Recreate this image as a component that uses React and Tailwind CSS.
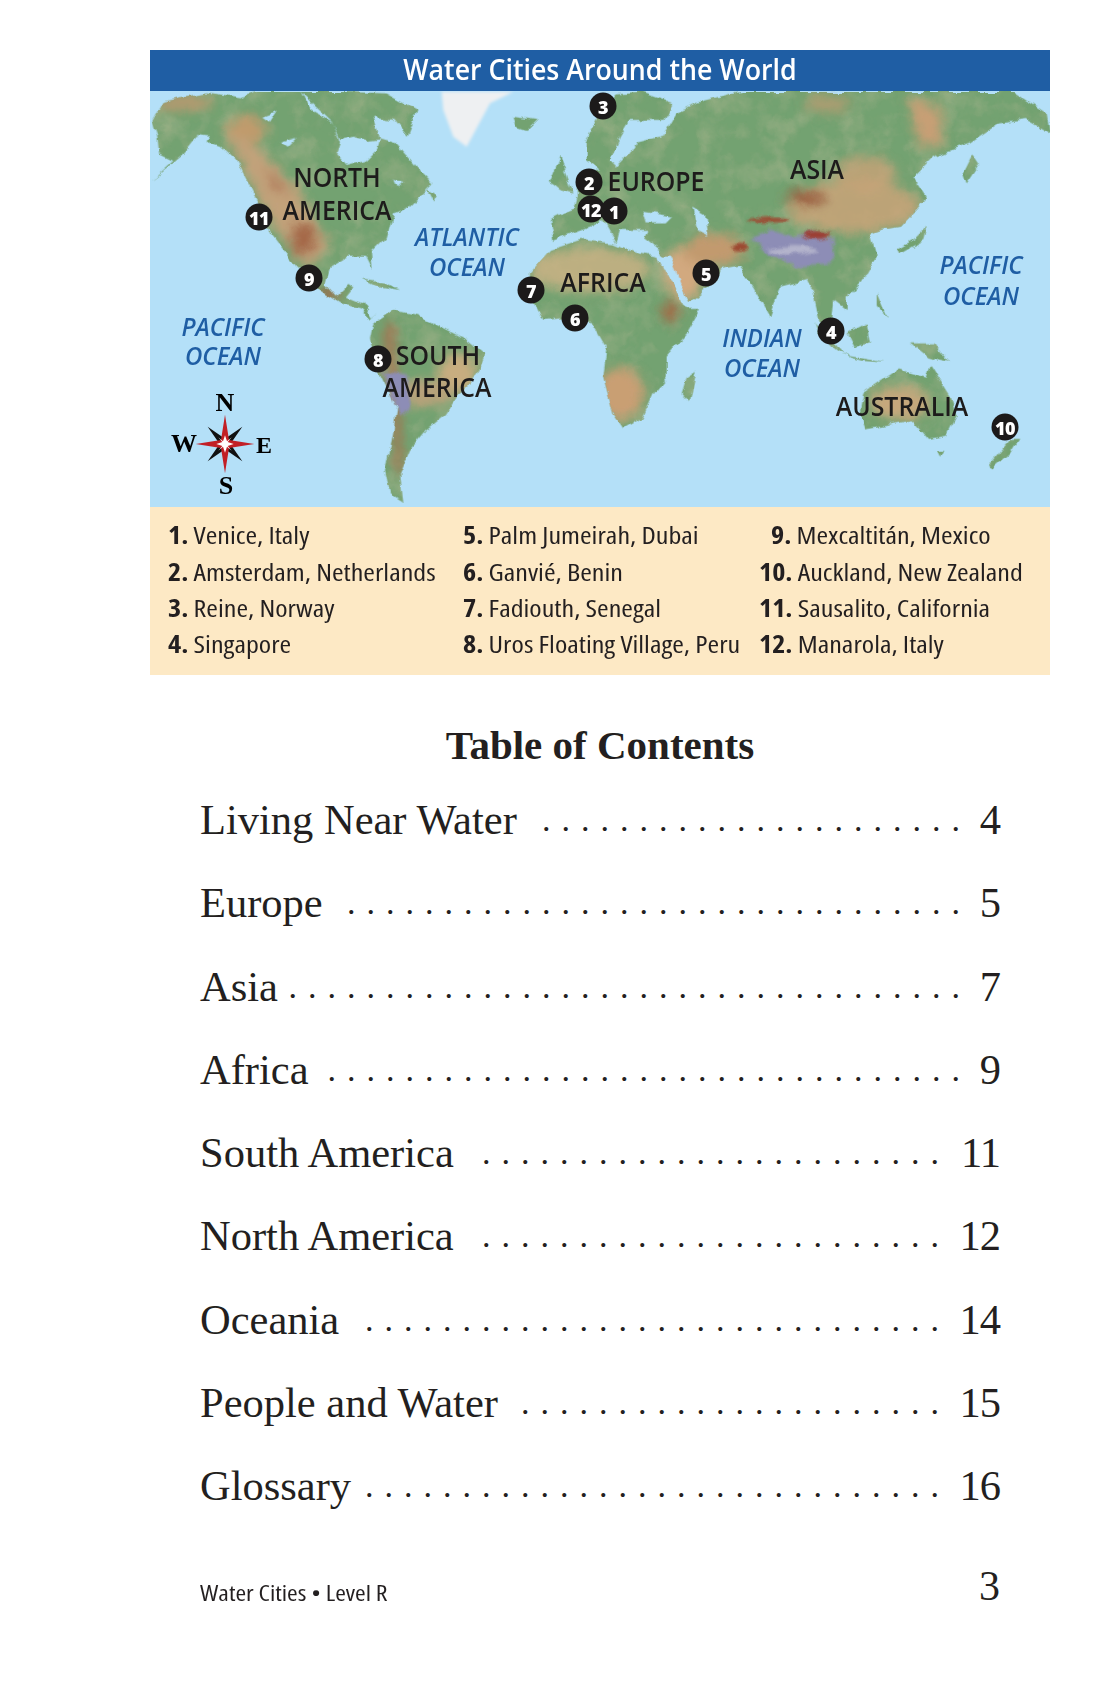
import React from "react";

const sans = "font-['Open_Sans',sans-serif]";

// outlines traced off the map, in 3x map pixels
const westLand = [
  "40,240 70,185 200,160 300,175 350,155 480,155 520,215 580,250 600,310 590,340 620,375 680,360 710,330 720,295 770,310 830,380 880,430 850,460 810,500 760,520 740,590 690,640 695,690 675,650 620,650 570,680 555,730 590,770 625,735 640,745 620,770 670,790 695,830 715,815 690,835 660,805 600,790 540,750 470,680 420,620 390,580 360,500 335,450 290,360 240,315 170,290 130,340 60,400 35,420 100,360 60,340 55,290",
  "480,155 600,155 700,230 720,295 680,300 640,290 600,300 580,250",
  "600,155 740,160 830,210 800,290 760,240 700,230 640,200",
  "700,850 760,810 830,825 900,860 980,900 1035,945 1010,1010 960,1060 920,1120 860,1170 810,1230 780,1300 790,1385 750,1360 735,1290 760,1180 770,1100 720,1000 700,950 690,900",
  "1120,230 1190,240 1160,270 1130,260",
  "670,715 730,725 780,750 720,740",
  "860,450 890,470 880,490",
  "1230,425 1260,350 1280,400 1300,460 1260,450",
  "1225,425 1250,400 1250,440",
];

const eastLand = [
  "-90,540 -60,525 -20,510 -10,470 -10,440 30,400 60,390 20,360 20,300 60,220 110,160 180,155 280,190 250,240 150,240 120,290 90,360 110,380 150,340 170,310 250,290 290,220 350,190 430,170 490,155 900,155 1300,155 1400,220 1410,280 1340,240 1260,250 1170,310 1060,350 1000,410 1040,470 960,560 900,570 870,580 890,650 850,720 800,770 800,810 760,780 750,870 720,850 700,760 680,720 600,740 570,830 520,740 480,680 420,690 410,720 330,785 280,700 240,630 190,590 200,570 120,570 110,610 70,540 30,560 -30,580 -80,600",
  "-150,700 -90,630 0,600 100,610 170,640 235,650 290,760 320,810 360,810 320,880 260,950 260,1010 220,1060 190,1130 130,1165 100,1120 70,1010 80,920 40,850 -60,835 -110,840 -150,760",
  "350,990 330,1085 305,1060 320,1010",
  "1040,560 1030,600 960,640 955,625 1000,600",
  "1180,340 1200,370 1160,430 1150,400",
  "890,760 920,830 890,800",
  "800,880 860,850 870,910 820,920",
  "700,850 790,940 770,930 720,890",
  "780,940 920,965 850,960",
  "990,910 1060,910 1110,965 1040,950",
  "850,1060 960,985 1040,1010 1050,975 1110,1070 1130,1130 1100,1190 1050,1200 1000,1140 860,1165 840,1110",
  "1070,1230 1090,1230 1080,1250",
  "1290,1200 1315,1200 1290,1240 1240,1285 1232,1270",
];

const water = [
  "190,515 280,530 260,550 200,550",
  "340,500 375,520 385,590 355,575",
  "245,650 270,650 320,770 305,785",
];

const lakes = ["420,305 470,290 440,320", "370,230 410,215 390,245", "170,285 210,290 190,320", "760,420 790,425 770,445"];

const pins = [
  { n: "11", pos: "left-[109px] top-[126px]" },
  { n: "9", pos: "left-[159px] top-[187px]" },
  { n: "8", pos: "left-[228px] top-[268px]" },
  { n: "7", pos: "left-[381px] top-[199px]" },
  { n: "6", pos: "left-[425px] top-[227px]" },
  { n: "2", pos: "left-[439px] top-[91px]" },
  { n: "12", pos: "left-[441px] top-[118px]" },
  { n: "1", pos: "left-[464px] top-[120px]" },
  { n: "3", pos: "left-[453px] top-[15px]" },
  { n: "5", pos: "left-[556px] top-[182px]" },
  { n: "4", pos: "left-[681px] top-[240px]" },
  { n: "10", pos: "left-[855px] top-[336px]" },
];

const landLabels = [
  { t: "NORTH", pos: "left-[187px] top-[85px]" },
  { t: "AMERICA", pos: "left-[187px] top-[118px]" },
  { t: "SOUTH", pos: "left-[288px] top-[263px]" },
  { t: "AMERICA", pos: "left-[287px] top-[295px]" },
  { t: "AFRICA", pos: "left-[453px] top-[190px]" },
  { t: "EUROPE", pos: "left-[506px] top-[89px]" },
  { t: "ASIA", pos: "left-[667px] top-[77px]" },
  { t: "AUSTRALIA", pos: "left-[752px] top-[314px]" },
];

const oceanLabels = [
  { t: "ATLANTIC", pos: "left-[317px] top-[145px]" },
  { t: "OCEAN", pos: "left-[317px] top-[175px]" },
  { t: "PACIFIC", pos: "left-[73px] top-[235px]" },
  { t: "OCEAN", pos: "left-[73px] top-[264px]" },
  { t: "PACIFIC", pos: "left-[831px] top-[173px]" },
  { t: "OCEAN", pos: "left-[831px] top-[204px]" },
  { t: "INDIAN", pos: "left-[612px] top-[246px]" },
  { t: "OCEAN", pos: "left-[612px] top-[276px]" },
];

const legend = [
  { n: "1.", name: "Venice, Italy" },
  { n: "5.", name: "Palm Jumeirah, Dubai" },
  { n: "9.", name: "Mexcaltitán, Mexico", pad: "pl-3" },
  { n: "2.", name: "Amsterdam, Netherlands" },
  { n: "6.", name: "Ganvié, Benin" },
  { n: "10.", name: "Auckland, New Zealand" },
  { n: "3.", name: "Reine, Norway" },
  { n: "7.", name: "Fadiouth, Senegal" },
  { n: "11.", name: "Sausalito, California" },
  { n: "4.", name: "Singapore" },
  { n: "8.", name: "Uros Floating Village, Peru" },
  { n: "12.", name: "Manarola, Italy" },
];

const contents = [
  { title: "Living Near Water", page: "4", dots: 22, num: "w-[29px]" },
  { title: "Europe", page: "5", dots: 32, num: "w-[29px]" },
  { title: "Asia", page: "7", dots: 35, num: "w-[29px]" },
  { title: "Africa", page: "9", dots: 33, num: "w-[29px]" },
  { title: "South America", page: "11", dots: 24, num: "w-[50px]" },
  { title: "North America", page: "12", dots: 24, num: "w-[50px]" },
  { title: "Oceania", page: "14", dots: 30, num: "w-[50px]" },
  { title: "People and Water", page: "15", dots: 22, num: "w-[50px]" },
  { title: "Glossary", page: "16", dots: 30, num: "w-[50px]" },
];

const WorldMap = () => (
  <svg viewBox="0 0 2700 1248" className="absolute inset-0 h-full w-full">
    <defs>
      <clipPath id="land">
        {westLand.map((p) => (
          <polygon key={p} points={p} transform="translate(-30 -153)" />
        ))}
        {eastLand.map((p) => (
          <polygon key={p} points={p} transform="translate(1290 -153)" />
        ))}
      </clipPath>
      <filter id="soft" x="-30%" y="-30%" width="160%" height="160%">
        <feGaussianBlur stdDeviation="16" />
      </filter>
      <filter id="softer" x="-30%" y="-30%" width="160%" height="160%">
        <feGaussianBlur stdDeviation="5" />
      </filter>
      {/* roughens the straight polygon coasts */}
      <filter id="rough" x="0" y="0" width="100%" height="100%" filterUnits="objectBoundingBox">
        <feTurbulence type="fractalNoise" baseFrequency="0.022" numOctaves="4" seed="7" result="noise" />
        <feDisplacementMap in="SourceGraphic" in2="noise" scale="24" xChannelSelector="R" yChannelSelector="G" />
        <feGaussianBlur stdDeviation="1.5" />
      </filter>
      <filter id="mottle" x="0" y="0" width="100%" height="100%">
        <feTurbulence type="fractalNoise" baseFrequency="0.014" numOctaves="4" seed="3" />
        <feColorMatrix values="0 0 0 0 0.72  0 0 0 0 0.58  0 0 0 0 0.40  1.5 0 0 0 -0.62" />
      </filter>
    </defs>
    <polygon points="905,155 1120,155 1050,190 980,320 940,290 910,210" transform="translate(-30 -153)" fill="#eef0f2" filter="url(#softer)" />
    <g filter="url(#rough)">
      <g clipPath="url(#land)">
        <rect width="2700" height="1248" fill="#73a271" />
        <rect width="2700" height="1248" filter="url(#mottle)" opacity="0.45" />
        <g filter="url(#soft)" transform="translate(-30 -153)">
          <ellipse cx="320" cy="270" rx="60" ry="45" fill="#c79a6c" opacity="0.9" />
          <polygon points="250,270 350,320 470,440 570,620 500,690 400,560 320,400" fill="#c2a27a" />
          <polygon points="370,380 430,440 440,470 400,440" fill="#a8664a" />
          <ellipse cx="490" cy="595" rx="40" ry="50" fill="#a5694a" />
          <ellipse cx="130" cy="190" rx="90" ry="24" fill="#b59a70" />
          <polygon points="730,850 760,850 790,1300 770,1300" fill="#a8704e" />
          <ellipse cx="950" cy="1000" rx="60" ry="60" fill="#c8ad80" />
          <ellipse cx="850" cy="1060" rx="90" ry="40" fill="#b8a27a" />
          <ellipse cx="570" cy="760" rx="30" ry="14" fill="#a5563e" />
        </g>
        <g filter="url(#soft)" transform="translate(1290 -153)">
          <ellipse cx="30" cy="690" rx="180" ry="70" fill="#c9b184" opacity="0.85" />
          <ellipse cx="120" cy="1060" rx="70" ry="80" fill="#c99f73" />
          <ellipse cx="310" cy="700" rx="60" ry="80" fill="#d2a97f" />
          <ellipse cx="270" cy="815" rx="24" ry="30" fill="#a56744" />
          <ellipse cx="400" cy="630" rx="90" ry="50" fill="#c29a6e" />
          <ellipse cx="820" cy="500" rx="200" ry="80" fill="#c9a378" opacity="0.85" />
          <ellipse cx="860" cy="400" rx="90" ry="50" fill="#c9a378" opacity="0.8" />
          <ellipse cx="680" cy="475" rx="60" ry="22" fill="#9a5a3c" />
          <polygon points="980,170 1080,200 1090,320 1020,320" fill="#c79f74" />
          <ellipse cx="740" cy="190" rx="70" ry="30" fill="#b59c72" opacity="0.8" />
          <ellipse cx="960" cy="1090" rx="90" ry="50" fill="#c6a77b" />
        </g>
        <g transform="translate(1290 -153)">
          <polygon points="515,590 570,565 640,590 700,575 760,600 765,650 740,675 650,680 560,640" fill="#8d8db6" filter="url(#softer)" />
          <ellipse cx="640" cy="630" rx="70" ry="12" fill="#b4b4cc" filter="url(#softer)" />
          <ellipse cx="710" cy="585" rx="40" ry="12" fill="#9c3f34" filter="url(#softer)" />
          <ellipse cx="480" cy="620" rx="26" ry="12" fill="#9c4a32" filter="url(#softer)" />
          <ellipse cx="570" cy="540" rx="60" ry="8" fill="#9c4a32" filter="url(#softer)" />
        </g>
        <polygon points="730,990 800,1000 810,1110 775,1130" transform="translate(-30 -153)" fill="#8d8db6" filter="url(#softer)" />
      </g>
      {lakes.map((p) => (
        <polygon key={p} points={p} transform="translate(-30 -153)" fill="#b4e0f8" />
      ))}
      {water.map((p) => (
        <polygon key={p} points={p} transform="translate(1290 -153)" fill="#b4e0f8" />
      ))}
    </g>
    {/* compass */}
    <g transform="translate(225 1059)">
      <polygon points="0,-16 52,-52 16,0 52,52 0,16 -52,52 -16,0 -52,-52" fill="#111" />
      <polygon points="0,-88 12,-12 88,0 12,12 0,88 -12,12 -88,0 -12,-12" fill="#c21f26" />
      <polygon points="0,-26 6,-8 20,-20 8,-6 26,0 8,6 20,20 6,8 0,26 -6,8 -20,20 -8,6 -26,0 -8,-6 -20,-20 -6,-8" fill="#fff" />
    </g>
  </svg>
);

const App = () => {
  return (
    <div className="h-[1700px] w-[1100px] bg-white text-[#231f20]">
      <div className="pl-[150px] pr-[50px] pt-[50px]">
        <div className={`flex h-[41px] items-center justify-center bg-[#1f5ea4] pb-[4px] text-[28px] font-semibold text-white ${sans}`}>
          <span className="scale-x-[0.955]">Water Cities Around the World</span>
        </div>
        <div className="relative h-[416px] overflow-hidden bg-[#b4e0f8]">
          <WorldMap />
          {landLabels.map((l) => (
            <span key={l.pos} className={`absolute -translate-x-1/2 -translate-y-1/2 scale-x-[0.92] whitespace-nowrap text-[27px] font-semibold leading-none text-[#1d1b1b] ${l.pos} ${sans}`}>
              {l.t}
            </span>
          ))}
          {oceanLabels.map((l) => (
            <span key={l.pos} className={`absolute -translate-x-1/2 -translate-y-1/2 scale-x-[0.92] whitespace-nowrap text-[26px] font-semibold italic leading-none text-[#1f5ea4] ${l.pos} ${sans}`}>
              {l.t}
            </span>
          ))}
          {pins.map((p) => (
            <span key={p.n} className={`absolute flex h-[27px] w-[27px] -translate-x-1/2 -translate-y-1/2 items-center justify-center rounded-full bg-[#1c1a1a] text-[18px] font-extrabold leading-none tracking-[-0.5px] text-white ${p.pos} ${sans}`}>
              {p.n}
            </span>
          ))}
          <span className="absolute left-[75px] top-[312px] -translate-x-1/2 -translate-y-1/2 font-['Liberation_Serif',serif] text-[26px] font-bold leading-none text-black">N</span>
          <span className="absolute left-[34px] top-[353px] -translate-x-1/2 -translate-y-1/2 font-['Liberation_Serif',serif] text-[26px] font-bold leading-none text-black">W</span>
          <span className="absolute left-[114px] top-[354px] -translate-x-1/2 -translate-y-1/2 font-['Liberation_Serif',serif] text-[24px] font-bold leading-none text-black">E</span>
          <span className="absolute left-[76px] top-[395px] -translate-x-1/2 -translate-y-1/2 font-['Liberation_Serif',serif] text-[26px] font-bold leading-none text-black">S</span>
        </div>
        <div className={`grid h-[168px] grid-cols-[295px_296px_1fr] content-center bg-[#fde9c5] pb-[2px] pl-[18px] text-[24px] leading-[36.3px] [font-stretch:75%] ${sans}`}>
          {legend.map((item) => (
            <div key={item.n} className={`whitespace-nowrap ${item.pad || ""}`}>
              <div className="inline-block origin-left scale-x-[1.17]">
                <span className="font-bold">{item.n}</span> {item.name}
              </div>
            </div>
          ))}
        </div>
      </div>

      <h1 className="mt-[45px] pl-[100px] text-center font-['Liberation_Serif',serif] text-[41px] font-bold leading-[50px]">
        Table of Contents
      </h1>

      <div className="mt-[8px] pl-[200px] pr-[100px] font-['Liberation_Serif',serif] text-[42.5px] leading-[83.3px]">
        {contents.map((row) => (
          <div key={row.title} className="flex">
            <span className="whitespace-nowrap">{row.title}</span>
            <span className="flex-1 whitespace-nowrap text-right text-[34px] tracking-[11px]">
              {".".repeat(row.dots)}
            </span>
            <span className={`text-right tracking-[-1px] ${row.num}`}>{row.page}</span>
          </div>
        ))}
      </div>

      <div className="mt-[37px] flex items-end justify-between pl-[200px] pr-[100px]">
        <span className={`mb-[4px] inline-block origin-left scale-x-[1.17] text-[22px] leading-none [font-stretch:75%] ${sans}`}>Water Cities • Level R</span>
        <span className="font-['Liberation_Serif',serif] text-[42px] leading-none">3</span>
      </div>
    </div>
  );
};

export default App;
